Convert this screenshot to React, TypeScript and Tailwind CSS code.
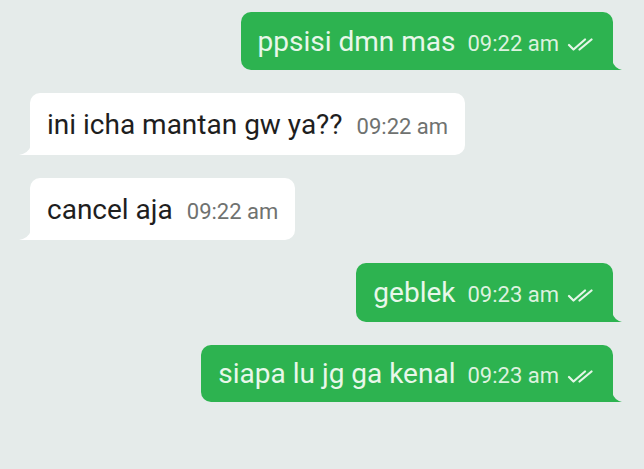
import React from "react";

type Msg = { text: string; time: string; mine: boolean; h: string };

const messages: Msg[] = [
  { text: "ppsisi dmn mas", time: "09:22 am", mine: true, h: "h-[58px]" },
  { text: "ini icha mantan gw ya??", time: "09:22 am", mine: false, h: "h-[62px]" },
  { text: "cancel aja", time: "09:22 am", mine: false, h: "h-[62px]" },
  { text: "geblek", time: "09:23 am", mine: true, h: "h-[59px]" },
  { text: "siapa lu jg ga kenal", time: "09:23 am", mine: true, h: "h-[57px]" },
];

function DoubleCheck() {
  return (
    <svg width="31" height="13" viewBox="0 0 31 13" fill="none" className="ml-[8px] mb-[-5px]">
      <path d="M2 7 L6.5 11.5 L18 1.5" stroke="#e4f6e7" strokeWidth="2.2" strokeLinecap="round" strokeLinejoin="round" />
      <path d="M12.5 11.5 L24.5 1.5" stroke="#e4f6e7" strokeWidth="2.2" strokeLinecap="round" />
    </svg>
  );
}

function Bubble({ msg }: { msg: Msg }) {
  if (msg.mine) {
    return (
      <div className="flex justify-end pr-[31px]">
        <div className={`relative flex items-center rounded-[10px] rounded-br-none bg-[#2db350] pl-[17px] pr-[15px] ${msg.h}`}>
          <div className="flex items-baseline">
            <span className="text-[28px] leading-[33px] text-[#e8f7ea]">{msg.text}</span>
            <span className="ml-[12px] text-[22px] leading-[26px] text-[#dcf2df]">{msg.time}</span>
            <DoubleCheck />
          </div>
          <svg width="10" height="10" viewBox="0 0 10 10" className="absolute bottom-0 right-[-9px]">
            <path d="M0 0 Q2 8 10 10 L0 10 Z" fill="#2db350" />
          </svg>
        </div>
      </div>
    );
  }
  return (
    <div className="flex justify-start pl-[30px]">
      <div className={`relative flex items-center rounded-[10px] rounded-bl-none bg-white pl-[17px] pr-[17px] ${msg.h}`}>
        <div className="flex items-baseline">
          <span className="text-[28px] leading-[33px] text-[#1e1e1e]">{msg.text}</span>
          <span className="ml-[14px] text-[22px] leading-[26px] text-[#6f7270]">{msg.time}</span>
        </div>
        <svg width="12" height="10" viewBox="0 0 12 10" className="absolute bottom-0 left-[-11px]">
          <path d="M12 0 Q10 8 0 10 L12 10 Z" fill="#ffffff" />
        </svg>
      </div>
    </div>
  );
}

export default function App() {
  return (
    <div className="flex h-[469px] w-[644px] flex-col gap-[23px] overflow-hidden bg-[#e5ebea] pt-[12px] font-['Roboto',sans-serif]">
      {messages.map((m, i) => (
        <Bubble key={i} msg={m} />
      ))}
    </div>
  );
}
